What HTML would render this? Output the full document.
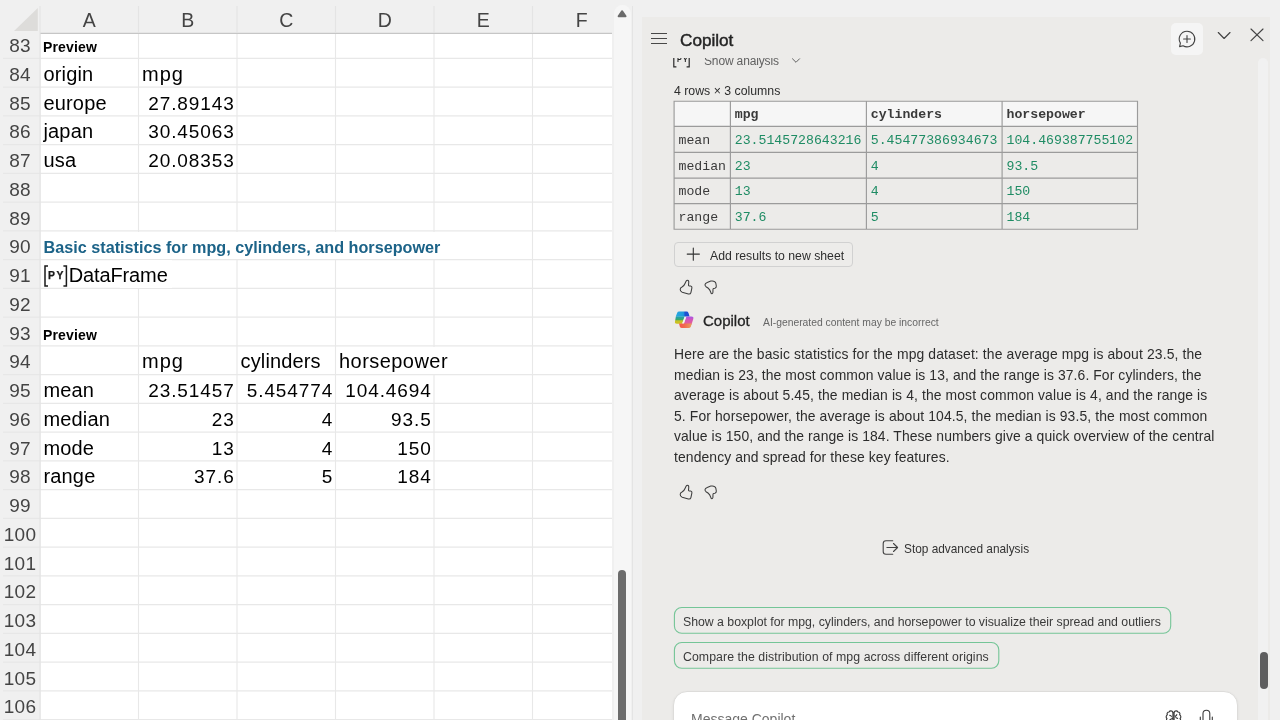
<!DOCTYPE html>
<html lang="en">
<head>
<meta charset="utf-8">
<title>Copilot in Excel</title>
<style>
*{box-sizing:border-box;margin:0;padding:0}
html,body{width:1280px;height:720px;overflow:hidden;background:#f0f0f0;font-family:"Liberation Sans",sans-serif;}
body{position:relative}
.abs{position:absolute}
#sheet,#para,#dt,.chip,#cap,#addtxt,#disc,#cpname,#ptitle,#stoptxt,#showan,#ph{will-change:transform}
/* ---------- grid ---------- */
#sheet{position:absolute;left:0;top:0;width:612px;height:720px;background:#f0f0f0;overflow:hidden}
#cells{position:absolute;left:40.5px;top:33.5px;width:571.5px;height:687px;background:#fff}
#gridsvg{position:absolute;left:0;top:0}
.colh{position:absolute;top:6.9px;height:26px;line-height:26px;width:98.5px;text-align:center;font-size:19.5px;color:#444}
.rn{position:absolute;left:0;width:40px;text-align:center;font-size:19px;color:#444;height:28.75px;line-height:28.75px;letter-spacing:.3px}
.c{position:absolute;font-size:20px;color:#000;height:27.5px;line-height:28.75px;white-space:nowrap;letter-spacing:.15px}
.cA{left:43.5px}
.df{letter-spacing:-.12px}
.cB{left:142.5px}
.cC{left:240.5px}
.cD{left:339px}
.num{text-align:right;width:94.5px;font-size:19px;letter-spacing:.9px}
.nB{left:140.2px}.nC{left:238.7px}.nD{left:337.2px}
.mp{letter-spacing:1px;left:142px}
.hp{letter-spacing:.45px}
.pv{font-weight:bold;font-size:14px;letter-spacing:.15px;left:43px}
.ttl{font-weight:bold;font-size:16.2px;color:#1c6388;letter-spacing:0;left:43.6px}
.cover{position:absolute;background:#fff;height:27.4px;top:calc(30.35px + var(--i)*28.75px)}
.py{display:inline-block;position:relative;width:25.2px;height:22px;vertical-align:-4.5px}
.py svg{position:absolute;left:0;top:0}
.py b{position:absolute;left:4.6px;top:5.3px;font-size:10.4px;line-height:11px;letter-spacing:1.6px;color:#1a1a1a;font-weight:bold;-webkit-text-stroke:.25px #1a1a1a}
/* ---------- scrollbar between ---------- */
#vtrack{position:absolute;left:613.8px;top:5px;width:17px;height:720px;background:#f6f6f6;border-radius:8.5px 8.5px 0 0}
#vthumb{position:absolute;left:618px;top:570px;width:8px;height:160px;background:#6c6c6c;border-radius:4px}
#vline{position:absolute;left:631.5px;top:6px;width:1.5px;height:714px;background:#e4e4e4}
/* ---------- panel ---------- */
#panel{position:absolute;left:642px;top:17px;width:628px;height:703px;background:#ecebe9;overflow:hidden;color:#242424}
#ptrack{position:absolute;left:1258.2px;top:58px;width:10.3px;height:670px;background:#f1f1f1;border-radius:5.2px 5.2px 0 0}
#pthumb{position:absolute;left:1260px;top:652px;width:7.5px;height:37px;background:#5e5e5e;border-radius:4px}
#dt{position:absolute;left:674.1px;top:101.2px;border-collapse:collapse;border-spacing:0;table-layout:fixed;width:463.4px;font-family:"Liberation Mono",monospace;font-size:13.2px;color:#333}
#dt th,#dt td{border:0;padding:0 0 0 4.5px;text-align:left;white-space:nowrap;overflow:hidden;line-height:16px;vertical-align:middle}
#dt th{font-weight:bold;color:#3a3a3a;padding-top:2.5px}
#dt td{color:#1f8c64;padding-top:3px}
#dt td.rh{color:#3a3a3a}
.chip{font-size:12.3px;line-height:26.5px;height:27px;color:#3a3a3a;white-space:nowrap}
</style>
</head>
<body>
<div id="sheet">
<div id="cells"></div>
<svg id="gridsvg" width="612" height="720" viewBox="0 0 612 720" fill="none" stroke="#e8e8e8" stroke-width="1.15">
<line x1="40" x2="612" y1="58.40" y2="58.40"/>
<line x1="40" x2="612" y1="87.15" y2="87.15"/>
<line x1="40" x2="612" y1="115.90" y2="115.90"/>
<line x1="40" x2="612" y1="144.65" y2="144.65"/>
<line x1="40" x2="612" y1="173.40" y2="173.40"/>
<line x1="40" x2="612" y1="202.15" y2="202.15"/>
<line x1="40" x2="612" y1="230.90" y2="230.90"/>
<line x1="40" x2="612" y1="259.65" y2="259.65"/>
<line x1="40" x2="612" y1="288.40" y2="288.40"/>
<line x1="40" x2="612" y1="317.15" y2="317.15"/>
<line x1="40" x2="612" y1="345.90" y2="345.90"/>
<line x1="40" x2="612" y1="374.65" y2="374.65"/>
<line x1="40" x2="612" y1="403.40" y2="403.40"/>
<line x1="40" x2="612" y1="432.15" y2="432.15"/>
<line x1="40" x2="612" y1="460.90" y2="460.90"/>
<line x1="40" x2="612" y1="489.65" y2="489.65"/>
<line x1="40" x2="612" y1="518.40" y2="518.40"/>
<line x1="40" x2="612" y1="547.15" y2="547.15"/>
<line x1="40" x2="612" y1="575.90" y2="575.90"/>
<line x1="40" x2="612" y1="604.65" y2="604.65"/>
<line x1="40" x2="612" y1="633.40" y2="633.40"/>
<line x1="40" x2="612" y1="662.15" y2="662.15"/>
<line x1="40" x2="612" y1="690.90" y2="690.90"/>
<line x1="40" x2="612" y1="719.65" y2="719.65"/>
<line y1="33" y2="720" x1="138.50" x2="138.50"/>
<line y1="33" y2="720" x1="237.00" x2="237.00"/>
<line y1="33" y2="720" x1="335.50" x2="335.50"/>
<line y1="33" y2="720" x1="434.00" x2="434.00"/>
<line y1="33" y2="720" x1="532.50" x2="532.50"/>

<line x1="3" x2="40" y1="58.40" y2="58.40" stroke="#e7e7e7"/>
<line x1="3" x2="40" y1="87.15" y2="87.15" stroke="#e7e7e7"/>
<line x1="3" x2="40" y1="115.90" y2="115.90" stroke="#e7e7e7"/>
<line x1="3" x2="40" y1="144.65" y2="144.65" stroke="#e7e7e7"/>
<line x1="3" x2="40" y1="173.40" y2="173.40" stroke="#e7e7e7"/>
<line x1="3" x2="40" y1="202.15" y2="202.15" stroke="#e7e7e7"/>
<line x1="3" x2="40" y1="230.90" y2="230.90" stroke="#e7e7e7"/>
<line x1="3" x2="40" y1="259.65" y2="259.65" stroke="#e7e7e7"/>
<line x1="3" x2="40" y1="288.40" y2="288.40" stroke="#e7e7e7"/>
<line x1="3" x2="40" y1="317.15" y2="317.15" stroke="#e7e7e7"/>
<line x1="3" x2="40" y1="345.90" y2="345.90" stroke="#e7e7e7"/>
<line x1="3" x2="40" y1="374.65" y2="374.65" stroke="#e7e7e7"/>
<line x1="3" x2="40" y1="403.40" y2="403.40" stroke="#e7e7e7"/>
<line x1="3" x2="40" y1="432.15" y2="432.15" stroke="#e7e7e7"/>
<line x1="3" x2="40" y1="460.90" y2="460.90" stroke="#e7e7e7"/>
<line x1="3" x2="40" y1="489.65" y2="489.65" stroke="#e7e7e7"/>
<line x1="3" x2="40" y1="518.40" y2="518.40" stroke="#e7e7e7"/>
<line x1="3" x2="40" y1="547.15" y2="547.15" stroke="#e7e7e7"/>
<line x1="3" x2="40" y1="575.90" y2="575.90" stroke="#e7e7e7"/>
<line x1="3" x2="40" y1="604.65" y2="604.65" stroke="#e7e7e7"/>
<line x1="3" x2="40" y1="633.40" y2="633.40" stroke="#e7e7e7"/>
<line x1="3" x2="40" y1="662.15" y2="662.15" stroke="#e7e7e7"/>
<line x1="3" x2="40" y1="690.90" y2="690.90" stroke="#e7e7e7"/>
<line x1="3" x2="40" y1="719.65" y2="719.65" stroke="#e7e7e7"/>
<line x1="40" x2="40" y1="6" y2="720" stroke="#e4e4e4"/>
<line x1="40.5" x2="612" y1="33.3" y2="33.3" stroke="#c6c6c6" stroke-width="1.2"/>
<line x1="138.5" x2="138.5" y1="6" y2="33" stroke="#e4e4e4"/>
<line x1="237" x2="237" y1="6" y2="33" stroke="#e4e4e4"/>
<line x1="335.5" x2="335.5" y1="6" y2="33" stroke="#e4e4e4"/>
<line x1="434" x2="434" y1="6" y2="33" stroke="#e4e4e4"/>
<line x1="532.5" x2="532.5" y1="6" y2="33" stroke="#e4e4e4"/>
<path d="M37.8 8 L37.8 31 L14 31 Z" fill="#dddcda" stroke="none"/>
</svg>
<div class="colh" style="left:40.0px">A</div>
<div class="colh" style="left:138.5px">B</div>
<div class="colh" style="left:237.0px">C</div>
<div class="colh" style="left:335.5px">D</div>
<div class="colh" style="left:434.0px">E</div>
<div class="colh" style="left:532.5px">F</div>
<div class="rn" style="top:32px">83</div>
<div class="rn" style="top:61px">84</div>
<div class="rn" style="top:90px">85</div>
<div class="rn" style="top:118px">86</div>
<div class="rn" style="top:147px">87</div>
<div class="rn" style="top:176px">88</div>
<div class="rn" style="top:205px">89</div>
<div class="rn" style="top:233px">90</div>
<div class="rn" style="top:262px">91</div>
<div class="rn" style="top:291px">92</div>
<div class="rn" style="top:320px">93</div>
<div class="rn" style="top:348px">94</div>
<div class="rn" style="top:377px">95</div>
<div class="rn" style="top:406px">96</div>
<div class="rn" style="top:435px">97</div>
<div class="rn" style="top:463px">98</div>
<div class="rn" style="top:492px">99</div>
<div class="rn" style="top:521px">100</div>
<div class="rn" style="top:550px">101</div>
<div class="rn" style="top:578px">102</div>
<div class="rn" style="top:607px">103</div>
<div class="rn" style="top:636px">104</div>
<div class="rn" style="top:665px">105</div>
<div class="rn" style="top:693px">106</div>
<div class="cover" style="--i:7;left:42px;width:402px"></div>
<div class="cover" style="--i:8;left:120px;width:52px"></div>
<div class="cover" style="--i:11;left:420px;width:30px"></div>
<div class="c pv" style="top:33px">Preview</div>
<div class="c cA" style="top:60px">origin</div>
<div class="c cB mp" style="top:60px">mpg</div>
<div class="c cA" style="top:89px">europe</div>
<div class="c num nB" style="top:90px">27.89143</div>
<div class="c cA" style="top:117px">japan</div>
<div class="c num nB" style="top:118px">30.45063</div>
<div class="c cA" style="top:146px">usa</div>
<div class="c num nB" style="top:147px">20.08353</div>
<div class="c ttl" style="top:233px">Basic statistics for mpg, cylinders, and horsepower</div>
<div class="c cA df" style="top:261px"><span class="py"><svg width="25" height="22" viewBox="0 0 25 22" fill="none" stroke="#1a1a1a" stroke-width="1.5"><path d="M4 1 H1 V21 H4"/><path d="M19.4 1 H22.4 V21 H19.4"/></svg><b>PY</b></span>DataFrame</div>
<div class="c pv" style="top:321px">Preview</div>
<div class="c cB mp" style="top:347px">mpg</div>
<div class="c cC" style="top:347px">cylinders</div>
<div class="c cD hp" style="top:347px">horsepower</div>
<div class="c cA" style="top:376px">mean</div>
<div class="c num nB" style="top:377px">23.51457</div>
<div class="c num nC" style="top:377px">5.454774</div>
<div class="c num nD" style="top:377px">104.4694</div>
<div class="c cA" style="top:405px">median</div>
<div class="c num nB" style="top:406px">23</div>
<div class="c num nC" style="top:406px">4</div>
<div class="c num nD" style="top:406px">93.5</div>
<div class="c cA" style="top:434px">mode</div>
<div class="c num nB" style="top:435px">13</div>
<div class="c num nC" style="top:435px">4</div>
<div class="c num nD" style="top:435px">150</div>
<div class="c cA" style="top:462px">range</div>
<div class="c num nB" style="top:463px">37.6</div>
<div class="c num nC" style="top:463px">5</div>
<div class="c num nD" style="top:463px">184</div>
</div>
<div id="vtrack"></div>
<svg class="abs" style="left:616px;top:9px" width="12" height="10" viewBox="0 0 12 10"><path d="M6.1 2.1 L9.7 7.3 L2.5 7.3 Z" fill="#6b6b6b" stroke="#6b6b6b" stroke-width="1.7" stroke-linejoin="round"/></svg>
<div id="vthumb"></div>
<div id="vline"></div>

<div id="panel"></div>
<div id="ptrack"></div>
<div id="pthumb"></div>

<!-- clipped previous row -->
<div class="abs" id="cliprow" style="left:660px;top:57.5px;width:200px;height:14px;overflow:hidden">
  <svg class="abs" style="left:13.4px;top:-7.5px" width="18" height="18" viewBox="0 0 18 18" fill="none" stroke="#2a2a2a" stroke-width="1.2">
    <path d="M3.4 1.2 H0.8 V16.8 H3.4"/><path d="M13.6 1.2 H16.2 V16.8 H13.6"/>
  </svg>
  <div class="abs" style="left:17.3px;top:-3px;font-size:7px;font-weight:bold;letter-spacing:1.3px;color:#242424;line-height:10px;will-change:transform">PY</div>
  <div class="abs" id="showan" style="left:43.5px;top:-4px;font-size:12px;line-height:14px;color:#616161;letter-spacing:-.15px;white-space:nowrap">Show analysis</div>
  <svg class="abs" style="left:131px;top:-1px" width="10" height="8" viewBox="0 0 10 8" fill="none" stroke="#616161" stroke-width="1"><path d="M1.2 1.5 L5 5.3 L8.8 1.5"/></svg>
</div>

<!-- header -->
<svg class="abs" style="left:650px;top:30px" width="18" height="18" viewBox="0 0 18 18" stroke="#484848" stroke-width="1" fill="none"><path d="M1 3.5 H17 M1 8.5 H17 M1 13.5 H17"/></svg>
<div class="abs" id="ptitle" style="left:679.6px;top:28.7px;font-size:17.15px;line-height:22px;color:#242424;-webkit-text-stroke:.45px #242424;white-space:nowrap">Copilot</div>
<div class="abs" style="left:1171px;top:23px;width:32px;height:32px;border-radius:5px;background:#f5f5f5"></div>
<svg class="abs" style="left:1177px;top:29px" width="20" height="20" viewBox="0 0 20 20" fill="none" stroke="#424242" stroke-width="1.1" stroke-linecap="round" stroke-linejoin="round">
  <path d="M10 2.2 a7.8 7.8 0 1 1 -3.9 14.55 L2.6 17.6 L3.4 14.1 A7.8 7.8 0 0 1 10 2.2 Z"/>
  <path d="M10 6.6 V13.4 M6.6 10 H13.4"/>
</svg>
<svg class="abs" style="left:1215px;top:27px" width="16" height="16" viewBox="0 0 16 16" fill="none" stroke="#424242" stroke-width="1.15" stroke-linecap="round" stroke-linejoin="round"><path d="M3.3 5.5 L9.1 11.5 L15 5.5"/></svg>
<svg class="abs" style="left:1248px;top:27px" width="16" height="16" viewBox="0 0 16 16" fill="none" stroke="#424242" stroke-width="1.15" stroke-linecap="round"><path d="M3 2 L15 13.6 M15 2 L3 13.6"/></svg>

<!-- table caption -->
<div class="abs" id="cap" style="left:673.6px;top:82.3px;font-size:12.3px;line-height:18px;color:#2e2e2e;white-space:nowrap">4 rows × 3 columns</div>

<!-- data table -->
<svg class="abs" style="left:0;top:0" width="1280" height="240" viewBox="0 0 1280 240" fill="none" stroke="#9b9b9b" stroke-width="1.15">
<rect x="674.1" y="101.2" width="463.4" height="25.1" fill="#f6f6f6" stroke="none"/>
<path d="M674.1 100.65 V229.75 M730.4 100.65 V229.75 M866.4 100.65 V229.75 M1002.1 100.65 V229.75 M1137.5 100.65 V229.75 M673.5500000000001 101.2 H1138.05 M673.5500000000001 126.3 H1138.05 M673.5500000000001 152.4 H1138.05 M673.5500000000001 178.1 H1138.05 M673.5500000000001 203.6 H1138.05 M673.5500000000001 229.2 H1138.05"/>
</svg>
<table id="dt">
<tr style="height:25.1px">
<th style="width:56.3px"></th><th style="width:136.0px">mpg</th><th style="width:135.7px">cylinders</th><th style="width:135.4px">horsepower</th>
</tr>
<tr style="height:26.1px">
<td class="rh">mean</td><td>23.5145728643216</td><td>5.45477386934673</td><td>104.469387755102</td>
</tr>
<tr style="height:25.7px">
<td class="rh">median</td><td>23</td><td>4</td><td>93.5</td>
</tr>
<tr style="height:25.5px">
<td class="rh">mode</td><td>13</td><td>4</td><td>150</td>
</tr>
<tr style="height:25.6px">
<td class="rh">range</td><td>37.6</td><td>5</td><td>184</td>
</tr>
</table>

<!-- add results button -->
<div class="abs" style="left:673.6px;top:242px;width:179.5px;height:24.6px;border:1px solid #d1d1d1;border-radius:4px;background:#edecea"></div>
<svg class="abs" style="left:686px;top:247px" width="14" height="14" viewBox="0 0 14 14" stroke="#333" stroke-width="1.1" fill="none" stroke-linecap="round"><path d="M7.3 1 V13.2 M1.2 7.1 H13.4"/></svg>
<div class="abs" id="addtxt" style="left:710px;top:246.6px;font-size:12.25px;line-height:18px;color:#2e2e2e;white-space:nowrap">Add results to new sheet</div>

<!-- thumbs 1 -->
<svg class="abs" style="left:672px;top:272px" width="60" height="30" viewBox="0 0 60 30" fill="none" stroke="#3d3d3d" stroke-width="1.05" stroke-linejoin="round">
 <path d="M15.5 8.2 C16.6 8.2 16.9 9.5 16.7 11 L16.5 13.3 Q16.5 13.9 17.2 13.9 L18.6 14 Q20.1 14.2 19.9 15.8 L18.9 20.6 Q18.4 22.4 16.4 22 L10.2 20.3 Q8 19.4 8.2 17.2 Q8.4 15.6 10 15 Q12.2 13.8 13 11.5 L14.2 9 Q14.7 8.2 15.5 8.2 Z"/>
 <path d="M40.3 8.9 Q43.2 8.9 43.8 11.2 L44.3 14 Q44.5 15.8 42.9 16.3 L41.6 16.5 Q41 16.6 41 17.3 L40.9 20.5 Q40.7 21.9 39.8 21.8 Q39 21.7 38.7 20.2 Q38 17.5 36 16 L34 14.7 Q32.8 13.8 33.05 12.4 Q33.4 11 35.2 10.4 L38.8 9.1 Q39.6 8.9 40.3 8.9 Z"/>
</svg>

<!-- copilot response header -->
<svg class="abs" style="left:668px;top:304px" width="40" height="30" viewBox="0 0 40 30">
  <defs>
    <linearGradient id="lgA" x1="0" y1="0" x2="1" y2="0"><stop offset="0" stop-color="#27a8e2"/><stop offset=".55" stop-color="#1f9bdc"/><stop offset=".68" stop-color="#1d52d2"/><stop offset="1" stop-color="#1d4fd0"/></linearGradient>
    <linearGradient id="lgB" x1="0" y1="0" x2="0" y2="1"><stop offset="0" stop-color="#1a9fc4"/><stop offset=".45" stop-color="#3aa868"/><stop offset=".62" stop-color="#c4c228"/><stop offset="1" stop-color="#cfc01e"/></linearGradient>
    <linearGradient id="lgC" x1="0" y1="0" x2="0" y2="1"><stop offset="0" stop-color="#a855e6"/><stop offset=".4" stop-color="#d456b8"/><stop offset="1" stop-color="#ec5e8c"/></linearGradient>
    <linearGradient id="lgD" x1="0" y1="0" x2="1" y2="0"><stop offset="0" stop-color="#f8564a"/><stop offset=".4" stop-color="#f2674e"/><stop offset="1" stop-color="#e8a060"/></linearGradient>
  </defs>
  <path d="M7.9 12.3 L9.1 8.9 Q9.6 7.6 11.1 7.6 H18.6 Q20 7.6 20.5 9 L21.5 12.2 Q20.8 12.5 19.2 12.5 H16.5 L16 12.3 Z" fill="url(#lgA)"/>
  <path d="M7.9 12.2 H16.6 L14.2 19.7 H8.9 Q6.5 19.7 7 17.5 Z" fill="url(#lgB)"/>
  <path d="M19.4 12.5 H23.4 Q25.9 12.5 25.3 14.8 L23.5 20.6 Q23.2 21 22.8 21 H15.6 L17.9 13.7 Q18.3 12.5 19.4 12.5 Z" fill="url(#lgC)"/>
  <path d="M11 19.6 H23.8 L22.8 22.7 Q22.2 24.1 20.7 24.1 H13.9 Q12.4 24.1 11.9 22.7 Z" fill="url(#lgD)"/>
  <path d="M16.7 13.2 H18.1 L15.7 19.3 H14.2 Z" fill="#f6f3f1"/>
</svg>
<div class="abs" id="cpname" style="left:702.8px;top:310.8px;font-size:15px;line-height:20px;color:#242424;-webkit-text-stroke:.3px #242424;white-space:nowrap">Copilot</div>
<div class="abs" id="disc" style="left:762.5px;top:315.8px;font-size:10.33px;line-height:14px;color:#666;white-space:nowrap">AI-generated content may be incorrect</div>

<!-- paragraph -->
<div class="abs" id="para" style="left:674px;top:344.2px;font-size:13.9px;line-height:20.5px;color:#2c2c2c;white-space:nowrap">
<span class="ln" style="letter-spacing:0.137px">Here are the basic statistics for the mpg dataset: the average mpg is about 23.5, the</span><br>
<span class="ln" style="letter-spacing:0.094px">median is 23, the most common value is 13, and the range is 37.6. For cylinders, the</span><br>
<span class="ln" style="letter-spacing:0.117px">average is about 5.45, the median is 4, the most common value is 4, and the range is</span><br>
<span class="ln" style="letter-spacing:0.121px">5. For horsepower, the average is about 104.5, the median is 93.5, the most common</span><br>
<span class="ln" style="letter-spacing:0.093px">value is 150, and the range is 184. These numbers give a quick overview of the central</span><br>
<span class="ln" style="letter-spacing:0.108px">tendency and spread for these key features.</span>
</div>

<!-- thumbs 2 -->
<svg class="abs" style="left:672px;top:477px" width="60" height="30" viewBox="0 0 60 30" fill="none" stroke="#3d3d3d" stroke-width="1.05" stroke-linejoin="round">
 <path d="M15.5 8.2 C16.6 8.2 16.9 9.5 16.7 11 L16.5 13.3 Q16.5 13.9 17.2 13.9 L18.6 14 Q20.1 14.2 19.9 15.8 L18.9 20.6 Q18.4 22.4 16.4 22 L10.2 20.3 Q8 19.4 8.2 17.2 Q8.4 15.6 10 15 Q12.2 13.8 13 11.5 L14.2 9 Q14.7 8.2 15.5 8.2 Z"/>
 <path d="M40.3 8.9 Q43.2 8.9 43.8 11.2 L44.3 14 Q44.5 15.8 42.9 16.3 L41.6 16.5 Q41 16.6 41 17.3 L40.9 20.5 Q40.7 21.9 39.8 21.8 Q39 21.7 38.7 20.2 Q38 17.5 36 16 L34 14.7 Q32.8 13.8 33.05 12.4 Q33.4 11 35.2 10.4 L38.8 9.1 Q39.6 8.9 40.3 8.9 Z"/>
</svg>

<!-- stop advanced analysis -->
<svg class="abs" style="left:874px;top:533px" width="40" height="30" viewBox="0 0 40 30" fill="none" stroke="#424242" stroke-width="1.1" stroke-linecap="round" stroke-linejoin="round">
  <path d="M18.75 7.7 H12 Q9.2 7.7 9.2 10.5 V18.5 Q9.2 21.25 12 21.25 H18.75"/>
  <path d="M12.9 14.5 H23.5 M19.5 10.5 L23.6 14.5 L19.5 18.5"/>
</svg>
<div class="abs" id="stoptxt" style="left:904.3px;top:540px;font-size:11.85px;line-height:18px;color:#333;white-space:nowrap">Stop advanced analysis</div>

<!-- suggestion chips -->
<svg class="abs" style="left:660px;top:600px" width="530" height="76" viewBox="660 600 530 76" fill="none" stroke="#74c597" stroke-width="1.1">
  <rect x="674.4" y="607.5" width="496.3" height="25.8" rx="7.4"/>
  <rect x="674.4" y="642.5" width="324.4" height="25.7" rx="7.4"/>
</svg>
<div class="abs chip" style="left:683.4px;top:608.7px"><span id="chip1" style="letter-spacing:-.015px">Show a boxplot for mpg, cylinders, and horsepower to visualize their spread and outliers</span></div>
<div class="abs chip" style="left:683.4px;top:643.7px"><span id="chip2" style="letter-spacing:.07px">Compare the distribution of mpg across different origins</span></div>

<!-- input box -->
<div class="abs" style="left:673px;top:691px;width:565px;height:60px;border-radius:14px;background:#fff;border:1px solid #dddcda;box-shadow:0 1px 3px rgba(0,0,0,.06)"></div>
<div class="abs" id="ph" style="left:691px;top:709px;font-size:14px;line-height:20px;color:#707070;white-space:nowrap">Message Copilot</div>
<svg class="abs" style="left:1160px;top:700px" width="60" height="20" viewBox="0 0 60 20" fill="none" stroke="#3a3a3a" stroke-width="1.1" stroke-linejoin="round" stroke-linecap="round">
  <path d="M12.9 12.2 C12.2 10.6 9.8 10.4 9.1 12 C7.4 11.9 6.6 13.6 7.4 14.8 C5.9 15.6 5.8 17.6 7 18.6 C6.2 19.6 6.4 21 7.4 21.8"/>
  <path d="M14.1 12.2 C14.8 10.6 17.2 10.4 17.9 12 C19.6 11.9 20.4 13.6 19.6 14.8 C21.1 15.6 21.2 17.6 20 18.6 C20.8 19.6 20.6 21 19.6 21.8"/>
  <path d="M12.9 12.2 V22 M14.1 12.2 V22 M9.6 15.2 Q11.2 15.2 11.4 16.8 M10 19.6 Q11.8 19.2 12.6 18 M17.6 18.4 Q15.8 18.4 15.6 16.8 M16.8 14.6 Q16.6 15.8 15.2 16"/>
  <path d="M43 13.6 a3.4 3.4 0 0 1 6.8 0 V22 M43 13.6 V22 M40.3 17 V22 M52.3 17 V22"/>
</svg>

</body>
</html>
